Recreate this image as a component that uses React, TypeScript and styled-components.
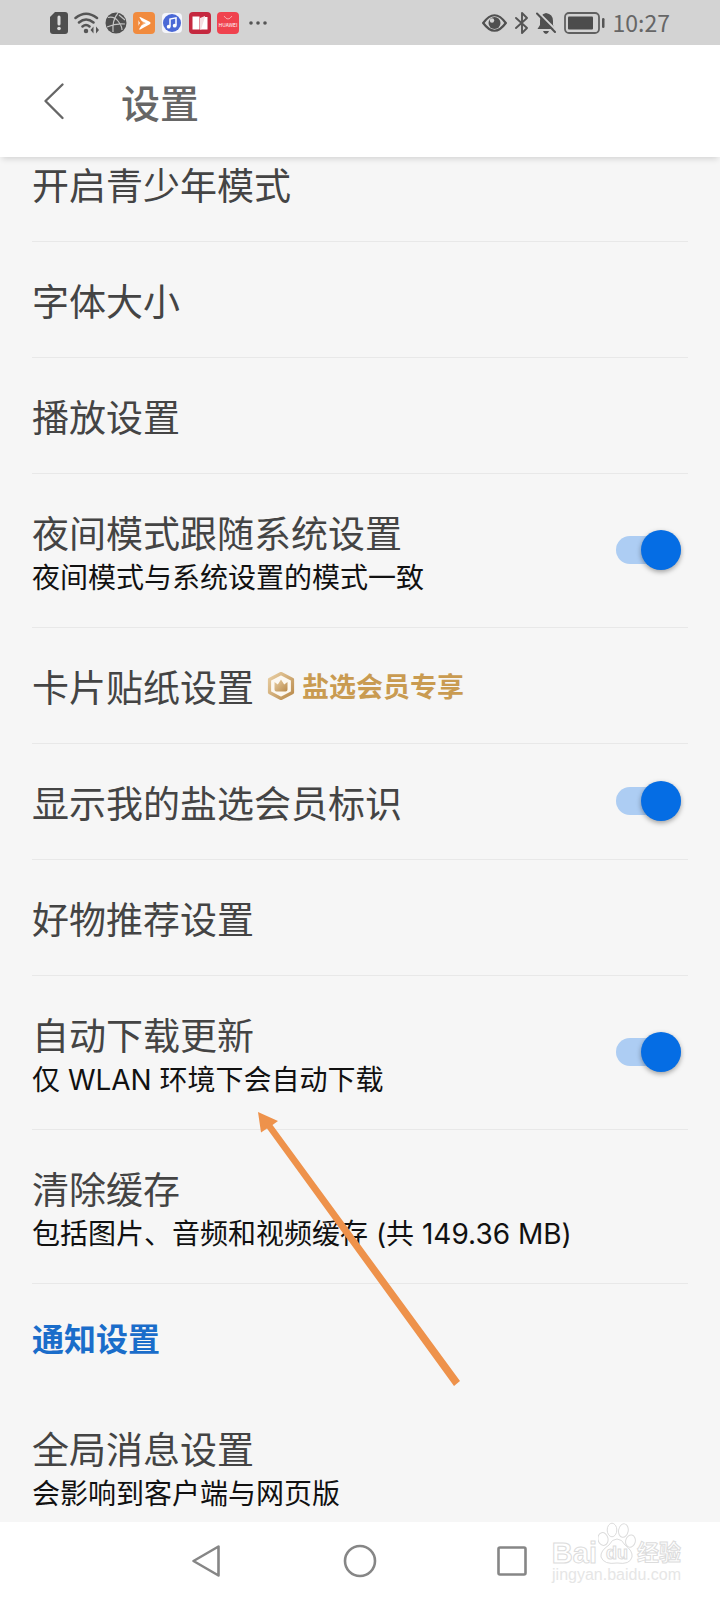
import React from "react";
import styled, { createGlobalStyle } from "styled-components";

const GlobalStyle = createGlobalStyle`
  * { box-sizing: border-box; }
  body { margin: 0; background: #f6f6f6; }
  body, button, input { font-family: "Noto Sans CJK SC", sans-serif; }
`;

const Screen = styled.div`
  display: flex;
  flex-direction: column;
  height: 100vh;
  overflow: hidden;
`;

const StatusBar = styled.div`
  display: flex;
  flex: none;
  align-items: center;
  justify-content: space-between;
  height: 45px;
  padding: 0 50px;
  background: #d3d3d3;
  color: #545454;
`;

const StatusGroup = styled.div<{ $gap: number }>`
  display: flex;
  align-items: center;
  gap: ${(p) => p.$gap}px;
  svg { display: block; }
`;

const Clock = styled.time`
  padding-bottom: 2px;
  font-size: 23px;
  line-height: 24px;
  color: #666;
`;

const Header = styled.header`
  position: relative;
  z-index: 1;
  display: flex;
  flex: none;
  align-items: center;
  height: 112px;
  padding: 0 32px;
  background: #fff;
  box-shadow: 0 4px 6px -2px rgba(0, 0, 0, 0.14);
`;

const IconButton = styled.button`
  display: flex;
  align-items: center;
  justify-content: center;
  width: 48px;
  height: 48px;
  padding: 0;
  border: 0;
  background: none;
  cursor: pointer;
`;

const PageTitle = styled.h1`
  margin: 0 0 0 41px;
  font-size: 39px;
  font-weight: 500;
  line-height: 56px;
  color: #666;
`;

const Content = styled.main`
  flex: 1;
  min-height: 0;
  overflow: hidden;
`;

const Scrolled = styled.div`
  position: relative;
  margin-top: -31px;
  padding: 0 32px;
`;

const List = styled.ul`
  margin: 0;
  padding: 0;
  list-style: none;
`;

const Item = styled.li`
  border-bottom: 1px solid #e8e8e8;
`;

const RowButton = styled.button`
  display: block;
  width: 100%;
  padding: 0;
  border: 0;
  background: none;
  text-align: left;
  cursor: pointer;
`;

const RowLabel = styled.label`
  display: flex;
  align-items: center;
  justify-content: space-between;
  padding-right: 7px;
  cursor: pointer;
`;

const RowText = styled.span<{ $hasNote: boolean }>`
  display: block;
  padding: 35px 0 ${(p) => (p.$hasNote ? 30 : 34)}px;
`;

const RowTitle = styled.span`
  display: flex;
  align-items: center;
  gap: 13px;
  font-size: 37px;
  line-height: 46px;
  color: #444;
`;

const RowNote = styled.span`
  display: block;
  margin-top: 4px;
  font-family: Inter, "Noto Sans CJK SC", sans-serif;
  font-size: 28px;
  line-height: 38px;
  color: #111;
`;

const Badge = styled.span`
  display: flex;
  align-items: center;
  gap: 7px;
  font-size: 27px;
  font-weight: 700;
  color: #c99b51;
  svg { display: block; }
`;

const Switch = styled.input`
  appearance: none;
  display: flex;
  flex: none;
  align-items: center;
  width: 65px;
  height: 28px;
  margin: 0 0 2px;
  border-radius: 14px;
  background: #e0e0e0;
  cursor: pointer;

  &::before {
    content: "";
    width: 40px;
    height: 40px;
    border-radius: 50%;
    background: #fff;
    box-shadow: 0 2px 5px rgba(0, 0, 0, 0.35);
  }
  &:checked {
    justify-content: flex-end;
    background: #adcdf3;
  }
  &:checked::before { background: #056de4; }
`;

const SectionTitle = styled.h2`
  margin: 0;
  padding: 30px 0;
  font-size: 32px;
  font-weight: 700;
  line-height: 46px;
  color: #1a6dca;
`;

const Pointer = styled.svg`
  position: absolute;
  left: 256px;
  top: 984px;
  pointer-events: none;
`;

const NavBar = styled.nav`
  position: relative;
  display: flex;
  flex: none;
  align-items: center;
  justify-content: center;
  gap: 104px;
  height: 78px;
  background: #fff;
`;

const Watermark = styled.div`
  position: absolute;
  right: 39px;
  bottom: 15px;
  display: flex;
  flex-direction: column;
  align-items: flex-end;
  font-family: "Liberation Sans", "Noto Sans CJK SC", sans-serif;
  color: #fff;
`;

const Brand = styled.div`
  display: flex;
  align-items: center;
  gap: 1px;
  height: 42px;
  font-weight: 700;
  line-height: 30px;
  -webkit-text-stroke: 1px #dcdcdc;
  svg { display: block; }
`;

const BrandWord = styled.span<{ $cjk?: boolean }>`
  padding-top: 18px;
  font-size: ${(p) => (p.$cjk ? 22 : 29)}px;
`;

const SiteName = styled.span`
  font-size: 16px;
  line-height: 20px;
  color: #e6e6e6;
`;

function NoticeIcons() {
  return (
    <StatusGroup $gap={6}>
      <svg width="18" height="22" viewBox="0 0 18 22">
        <path d="M5 0H15Q18 0 18 3V19Q18 22 15 22H3Q0 22 0 19V5Z" fill="#4e4e4e" />
        <path d="M9 5V12" stroke="#ddd" strokeWidth="3" strokeLinecap="round" />
        <circle cx="9" cy="16.5" r="1.8" fill="#ddd" />
      </svg>
      <svg width="25" height="22" viewBox="0 0 25 22" fill="none" stroke="#555" strokeWidth="2.5" strokeLinecap="round">
        <path d="M1.500 6Q12 -2.500 23 6M5 10.500Q12 4.500 19.500 10.500M8.500 14.500Q12 11.500 15.500 14.500" />
        <circle cx="12" cy="19" r="1" fill="#555" />
        <path d="M16.500 18L19.500 14.500V21.500ZM25 18L22 14.500V21.500Z" fill="#555" stroke="none" />
      </svg>
      <svg width="22" height="22" viewBox="0 0 22 22">
        <circle cx="11" cy="11" r="10.500" fill="#4f4f4f" />
        <path d="M3 5.500Q9 4 13 9T17 18M13 1Q7 8 8 20M20 12Q11 11 2 15M14 3L20 8" fill="none" stroke="#c4c4c4" strokeWidth="1.200" />
      </svg>
      <svg width="22" height="22" viewBox="0 0 22 22">
        <rect width="22" height="22" rx="4" fill="#f18b3e" />
        <path d="M7 6.500L16 11L7 16Z" fill="#f7b27c" stroke="#fff" strokeWidth="3" strokeLinejoin="round" />
        <path d="M4 4L8.500 11L4 18" fill="none" stroke="#f18b3e" strokeWidth="2.500" />
      </svg>
      <svg width="22" height="20" viewBox="-1 0 22 20">
        <rect width="20" height="20" rx="4" fill="#f4f5fb" />
        <circle cx="10" cy="10" r="9" fill="#4a68d6" />
        <path d="M8 13.500V6L14 4.800V12.500" fill="none" stroke="#fff" strokeWidth="1.500" />
        <circle cx="6.700" cy="13.700" r="1.900" fill="#fff" />
        <circle cx="12.700" cy="12.700" r="1.900" fill="#fff" />
      </svg>
      <svg width="22" height="22" viewBox="0 0 22 22">
        <rect width="22" height="22" rx="4" fill="#c5283f" />
        <path d="M3.500 4.500H10.500V17.500H3.500Z" fill="#fff" />
        <path d="M11 6L16 4V15.500L11 18Z" fill="#f6dfe2" />
        <path d="M16 5H18.500V17.500H12Z" fill="#fff" />
      </svg>
      <svg width="22" height="22" viewBox="0 0 22 22">
        <rect width="22" height="22" rx="4" fill="#f0424e" />
        <path d="M7 4Q11 10 15 4" fill="none" stroke="#f9a9ad" strokeWidth="1" />
        <text x="11" y="15" textAnchor="middle" fontSize="5" fill="#fff">HUAWEI</text>
      </svg>
      <svg width="26" height="22" viewBox="0 0 26 22" fill="#555">
        <circle cx="6" cy="11" r="1.800" />
        <circle cx="13" cy="11" r="1.800" />
        <circle cx="20" cy="11" r="1.800" />
      </svg>
    </StatusGroup>
  );
}

function SystemIcons() {
  return (
    <StatusGroup $gap={8}>
      <svg width="25" height="18" viewBox="0 0 25 18">
        <path d="M1.200 9Q12.500 -6.500 23.800 9Q12.500 24.500 1.200 9Z" fill="none" stroke="#505050" strokeWidth="2.200" />
        <circle cx="12.500" cy="9" r="6" fill="#505050" />
        <circle cx="10" cy="6.500" r="2.200" fill="#d3d3d3" />
      </svg>
      <svg width="13" height="22" viewBox="0 0 13 22" fill="none" stroke="#555" strokeWidth="1.900" strokeLinejoin="round" strokeLinecap="round">
        <path d="M1 6L12 16L7 21V1L12 6L1 16" />
      </svg>
      <svg width="20" height="22" viewBox="0 0 20 22">
        <path d="M10 1Q17 2 17 9V13L19 17H1.500L4 13V9Q4 2 10 1Z" fill="#505050" />
        <path d="M7 19H13Q12 22 10 22T7 19Z" fill="#505050" />
        <path d="M2.500 .5L20 18" stroke="#d3d3d3" strokeWidth="2" />
        <path d="M1 1.500L19 20" stroke="#505050" strokeWidth="2" strokeLinecap="round" />
      </svg>
      <svg width="41" height="22" viewBox="0 0 41 22">
        <rect x="1" y="1" width="34" height="20" rx="4" fill="none" stroke="#606060" strokeWidth="1.800" />
        <rect x="4" y="4.500" width="25" height="13" rx="1" fill="#4c4c4c" />
        <rect x="38" y="6" width="2.500" height="10" rx="1.200" fill="#555" />
      </svg>
      <Clock>10:27</Clock>
    </StatusGroup>
  );
}

function CrownIcon() {
  return (
    <svg width="28" height="30" viewBox="0 0 28 30">
      <defs>
        <linearGradient id="gold" x1="0" y1="0" x2="1" y2="1">
          <stop offset="0" stopColor="#e9cfa4" />
          <stop offset="1" stopColor="#b98a4b" />
        </linearGradient>
      </defs>
      <path d="M14 2.500L25.500 8.500V21.500L14 27.500L2.500 21.500V8.500Z" fill="#fcf8f1" stroke="url(#gold)" strokeWidth="3.200" strokeLinejoin="round" />
      <path d="M7.500 11L10.800 13.500L14 8.500L17.200 13.500L20.500 11V18.500Q20.500 20.500 18.500 20.500H9.500Q7.500 20.500 7.500 18.500Z" fill="url(#gold)" />
    </svg>
  );
}

interface Setting {
  title: string;
  note?: string;
  toggle?: boolean;
  vip?: boolean;
}

const generalSettings: Setting[] = [
  { title: "开启青少年模式" },
  { title: "字体大小" },
  { title: "播放设置" },
  { title: "夜间模式跟随系统设置", note: "夜间模式与系统设置的模式一致", toggle: true },
  { title: "卡片贴纸设置", vip: true },
  { title: "显示我的盐选会员标识", toggle: true },
  { title: "好物推荐设置" },
  { title: "自动下载更新", note: "仅 WLAN 环境下会自动下载", toggle: true },
  { title: "清除缓存", note: "包括图片、音频和视频缓存 (共 149.36 MB)" },
];

const noticeSettings: Setting[] = [{ title: "全局消息设置", note: "会影响到客户端与网页版" }];

function SettingRow({ title, note, toggle, vip }: Setting) {
  const text = (
    <RowText $hasNote={Boolean(note)}>
      <RowTitle>
        {title}
        {vip && (
          <Badge>
            <CrownIcon />
            盐选会员专享
          </Badge>
        )}
      </RowTitle>
      {note && <RowNote>{note}</RowNote>}
    </RowText>
  );
  return (
    <Item>
      {toggle ? (
        <RowLabel>
          {text}
          <Switch type="checkbox" defaultChecked />
        </RowLabel>
      ) : (
        <RowButton type="button">{text}</RowButton>
      )}
    </Item>
  );
}

export default function App() {
  return (
    <Screen>
      <GlobalStyle />
      <StatusBar>
        <NoticeIcons />
        <SystemIcons />
      </StatusBar>
      <Header>
        <IconButton type="button" aria-label="返回">
          <svg width="48" height="48" viewBox="0 0 48 48" fill="none" stroke="#666" strokeWidth="2.400" strokeLinecap="round" strokeLinejoin="round">
            <path d="M30.500 7.500L13.500 24L30.500 41" />
          </svg>
        </IconButton>
        <PageTitle>设置</PageTitle>
      </Header>
      <Content>
        <Scrolled>
          <List>
            {generalSettings.map((s) => (
              <SettingRow key={s.title} {...s} />
            ))}
          </List>
          <SectionTitle>通知设置</SectionTitle>
          <List>
            {noticeSettings.map((s) => (
              <SettingRow key={s.title} {...s} />
            ))}
          </List>
          <Pointer width="206" height="278" viewBox="0 0 206 278" fill="#ee924b" aria-hidden="true">
            <path d="M2 2L22 11L16.500 15L204 271L198 276L11 18.500L5 22.500Z" />
          </Pointer>
        </Scrolled>
      </Content>
      <NavBar>
        <IconButton type="button" aria-label="后退">
          <svg width="48" height="48" viewBox="0 0 48 48" fill="none" stroke="#868686" strokeWidth="2.600" strokeLinejoin="round">
            <path d="M34.500 9.500V38.500L9.500 24Z" />
          </svg>
        </IconButton>
        <IconButton type="button" aria-label="主页">
          <svg width="48" height="48" viewBox="0 0 48 48" fill="none" stroke="#868686" strokeWidth="2.600">
            <circle cx="24" cy="24" r="15" />
          </svg>
        </IconButton>
        <IconButton type="button" aria-label="最近任务">
          <svg width="48" height="48" viewBox="0 0 48 48" fill="none" stroke="#868686" strokeWidth="2.600">
            <rect x="10.500" y="10.500" width="27" height="27" rx="1.500" />
          </svg>
        </IconButton>
        <Watermark>
          <Brand>
            <BrandWord>Bai</BrandWord>
            <svg width="38" height="44" viewBox="0 0 38 44" fill="#fff" stroke="#dcdcdc" strokeWidth="1">
              <ellipse cx="5" cy="17" rx="5" ry="6.500" transform="rotate(-12 5 17)" />
              <ellipse cx="14" cy="8" rx="4.800" ry="6.800" />
              <ellipse cx="25.500" cy="8.500" rx="4.800" ry="6.800" transform="rotate(10 25 8)" />
              <ellipse cx="32.500" cy="19" rx="4.800" ry="6.200" transform="rotate(14 32 19)" />
              <path d="M19 17Q24 17 27 23Q35 29 34 35Q32 43 19 41Q6 43 3 35Q2 29 11 23Q14 17 19 17Z" />
              <text x="19" y="37" textAnchor="middle" fontSize="18" fontWeight="700" strokeWidth="1">du</text>
            </svg>
            <BrandWord $cjk>经验</BrandWord>
          </Brand>
          <SiteName>jingyan.baidu.com</SiteName>
        </Watermark>
      </NavBar>
    </Screen>
  );
}
